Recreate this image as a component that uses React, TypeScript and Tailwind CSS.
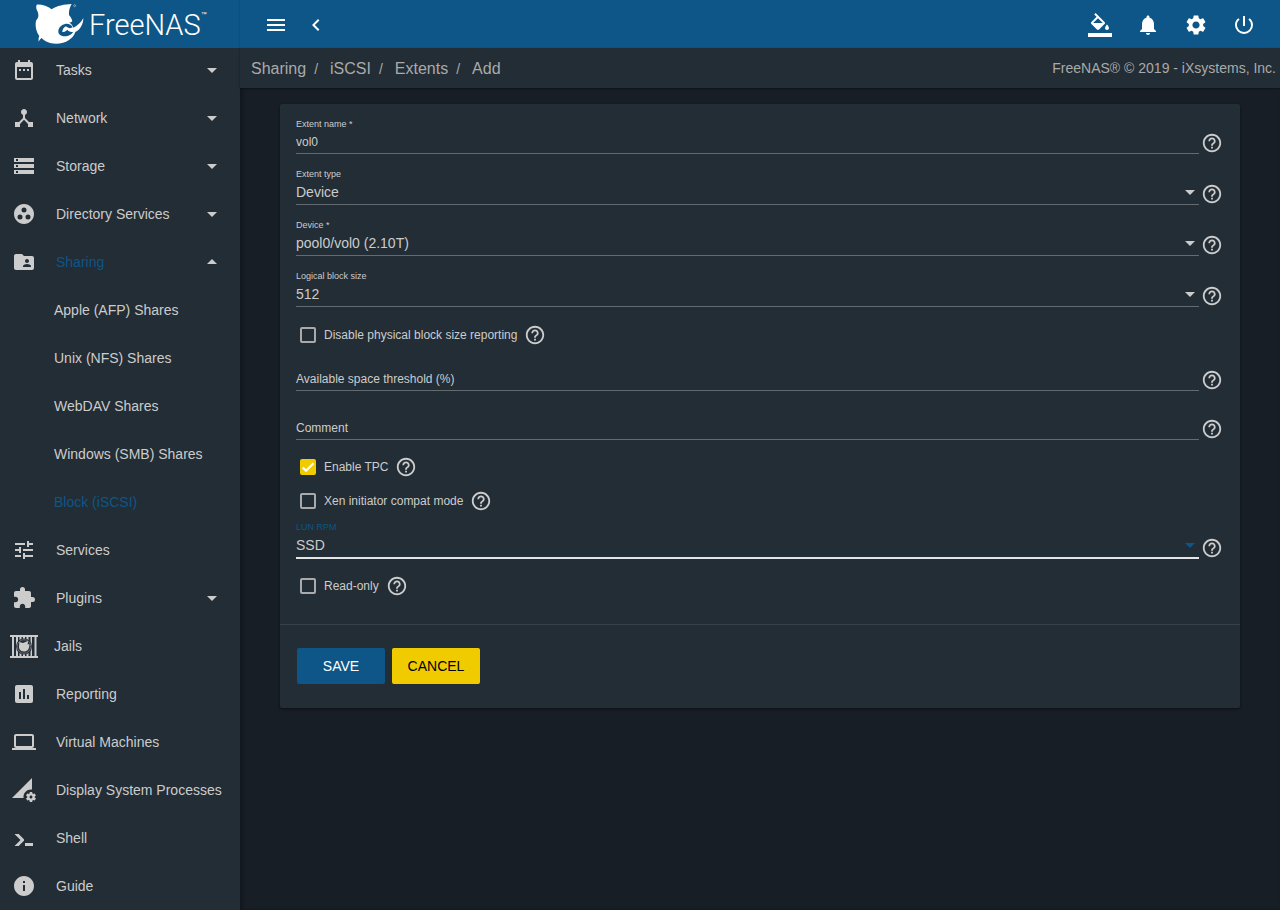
import type { ComponentType, ReactNode } from "react";
import {
  MdArrowDropDown,
  MdArrowDropUp,
  MdAssessment,
  MdChevronLeft,
  MdDateRange,
  MdDeviceHub,
  MdExtension,
  MdFolderShared,
  MdGroupWork,
  MdHelpOutline,
  MdInfo,
  MdLaptop,
  MdMenu,
  MdNotifications,
  MdPermDataSetting,
  MdPowerSettingsNew,
  MdSettings,
  MdStorage,
  MdTune,
} from "react-icons/md";

type IconType = ComponentType<{ className?: string }>;

function ShellIcon({ className }: { className?: string }) {
  return (
    <svg viewBox="0 0 24 24" fill="currentColor" className={className} aria-hidden="true">
      <path d="M13 20v-3h8v3h-8zM8.5 14L2.47 8h4.24l4.96 4.95c.58.59.58 1.55 0 2.12L6.74 20H2.5l6-6z" />
    </svg>
  );
}

function NetworkIcon({ className }: { className?: string }) {
  return (
    <svg viewBox="0 0 24 24" fill="currentColor" className={className} aria-hidden="true">
      <path d="M17 16l-4-4V8.820C14.160 8.400 15 7.300 15 6c0-1.660-1.340-3-3-3S9 4.340 9 6c0 1.300.84 2.400 2 2.820V12l-4 4H3v5h5v-3.050l4-4.200 4 4.200V21h5v-5h-4z" />
    </svg>
  );
}

function ColorFillIcon({ className }: { className?: string }) {
  return (
    <svg viewBox="0 0 24 24" fill="currentColor" className={className} aria-hidden="true">
      <path d="M16.56 8.94L7.62 0 6.21 1.41l2.38 2.38-5.15 5.15c-.59.59-.59 1.54 0 2.12l5.5 5.5c.29.29.68.44 1.06.44s.77-.15 1.06-.44l5.5-5.5c.59-.58.59-1.53 0-2.12zM5.21 10L10 5.21 14.79 10H5.21zM19 11.5s-2 2.17-2 3.5c0 1.1.9 2 2 2s2-.9 2-2c0-1.33-2-3.5-2-3.5zM0 20h24v4H0z" />
    </svg>
  );
}

function JailsIcon({ className }: { className?: string }) {
  return (
    <svg viewBox="0 0 28 24" className={className} aria-hidden="true">
      <g fill="currentColor">
        <path d="M0 1h28v2H0zM0 22h28v2H0zM2 3h2v19H2zM6 3h2v19H6zM9.500 3h2v19h-2zM16.500 3h2v19h-2zM20.500 3h1.500v19h-1.500zM24.500 3h2v19h-2zM13 3h2v19h-2z" />
      </g>
      <circle cx="14" cy="12.500" r="8" fill="#232d35" />
      <circle cx="14" cy="12.500" r="6.800" fill="none" stroke="currentColor" strokeWidth="0.800" opacity="0.5" />
      <path
        fill="currentColor"
        d="M9.200 8l3.800 1 5-2-.3 3.500 1.600-.5c.5 5-2 7.500-5.300 7.500-4 0-5.800-3.500-4.800-6.500z"
      />
    </svg>
  );
}

function SharkLogo({ className }: { className?: string }) {
  return (
    <svg viewBox="0 0 150 124" className={className} aria-hidden="true">
      <path
        fill="#fff"
        d="M5 4C20 3 38 8 50 18C66 7 88 3 110 2C104 11 101 23 102 35C107 41 111 47 112 54C108 57 104 59 101 57C108 61 113 66 115 73C127 67 138 58 145 44C145 62 136 79 121 86C114 106 94 121 63 121C43 121 29 114 20 104C16 107 14 110 11 115C10 108 11 102 13 98C3 84 0 66 3 52C11 43 12 35 8 25C4 18 2 11 5 4Z"
      />
      <path
        fill="#0d5687"
        d="M90 62C78 65 70 74 70 84C70 94 78 99 89 99C101 99 111 92 115 85C107 87 100 84 97 79C93 83 88 86 82 86C82 79 86 72 93 69C99 75 107 76 113 72C109 64 100 60 90 62Z"
      />
      <circle cx="119" cy="7" r="3" fill="none" stroke="#fff" strokeOpacity="0.6" strokeWidth="2" />
    </svg>
  );
}

interface NavEntry {
  label: string;
  icon: IconType;
  expand?: "down" | "up";
  active?: boolean;
  children?: { label: string; active?: boolean }[];
}

const NAV: NavEntry[] = [
  { label: "Tasks", icon: MdDateRange, expand: "down" },
  { label: "Network", icon: NetworkIcon, expand: "down" },
  { label: "Storage", icon: MdStorage, expand: "down" },
  { label: "Directory Services", icon: MdGroupWork, expand: "down" },
  {
    label: "Sharing",
    icon: MdFolderShared,
    expand: "up",
    active: true,
    children: [
      { label: "Apple (AFP) Shares" },
      { label: "Unix (NFS) Shares" },
      { label: "WebDAV Shares" },
      { label: "Windows (SMB) Shares" },
      { label: "Block (iSCSI)", active: true },
    ],
  },
  { label: "Services", icon: MdTune },
  { label: "Plugins", icon: MdExtension, expand: "down" },
  { label: "Jails", icon: JailsIcon },
  { label: "Reporting", icon: MdAssessment },
  { label: "Virtual Machines", icon: MdLaptop },
  { label: "Display System Processes", icon: MdPermDataSetting },
  { label: "Shell", icon: ShellIcon },
  { label: "Guide", icon: MdInfo },
];

function NavItem({ entry }: { entry: NavEntry }) {
  const Icon = entry.icon;
  const wide = entry.icon === JailsIcon;
  return (
    <li>
      <a href="#" className="flex h-12 items-center pr-4 whitespace-nowrap">
        <span className={wide ? "flex w-[54px] shrink-0 pl-2.5" : "flex w-14 shrink-0 pl-3"}>
          <Icon className={wide ? "h-6 w-7" : "size-6"} />
        </span>
        <span className={entry.active ? "grow text-[#0d5687]" : "grow"}>{entry.label}</span>
        {entry.expand === "down" && <MdArrowDropDown className="size-6 shrink-0" />}
        {entry.expand === "up" && <MdArrowDropUp className="size-6 shrink-0" />}
      </a>
      {entry.children && (
        <ul>
          {entry.children.map((child) => (
            <li key={child.label}>
              <a
                href="#"
                className={
                  child.active
                    ? "flex h-12 items-center pl-[54px] text-[#0d5687]"
                    : "flex h-12 items-center pl-[54px]"
                }
              >
                {child.label}
              </a>
            </li>
          ))}
        </ul>
      )}
    </li>
  );
}

function Help({ topic }: { topic: string }) {
  return (
    <button type="button" aria-label={`Help: ${topic}`} className="flex w-6 shrink-0 justify-center">
      <MdHelpOutline className="size-[22px]" />
    </button>
  );
}

function FieldRow({ label, children }: { label: string; children: ReactNode }) {
  return (
    <div className="flex items-end gap-px">
      <div className="relative flex grow flex-col">{children}</div>
      <Help topic={label} />
    </div>
  );
}

function TextField({ id, label, required, value }: { id: string; label: string; required?: boolean; value?: string }) {
  return (
    <FieldRow label={label}>
      <label
        htmlFor={id}
        className={
          value
            ? "text-[9px] leading-3"
            : "pointer-events-none absolute bottom-1 left-0 text-xs"
        }
      >
        {label}
        {required && " *"}
      </label>
      <input
        id={id}
        type="text"
        defaultValue={value}
        className={
          value
            ? "h-6 border-b border-[#636a70] bg-transparent text-xs outline-none"
            : "mt-3 h-6 border-b border-[#636a70] bg-transparent text-xs outline-none"
        }
      />
    </FieldRow>
  );
}

function SelectField({
  id,
  label,
  required,
  value,
  focused,
}: {
  id: string;
  label: string;
  required?: boolean;
  value: string;
  focused?: boolean;
}) {
  return (
    <FieldRow label={label}>
      <label htmlFor={id} className={focused ? "mb-px text-[9px] leading-3 text-[#0d5687]" : "mb-px text-[9px] leading-3"}>
        {label}
        {required && " *"}
      </label>
      <select
        id={id}
        defaultValue={value}
        className={
          focused
            ? "h-[25px] appearance-none border-b-2 border-[#e3e5e6] bg-transparent pb-0.5 text-sm outline-none"
            : "h-6 appearance-none border-b border-[#636a70] bg-transparent pb-0.5 text-sm outline-none"
        }
      >
        <option>{value}</option>
      </select>
      <svg
        viewBox="0 0 10 5"
        fill="currentColor"
        aria-hidden="true"
        className={
          focused
            ? "pointer-events-none absolute right-1 bottom-[11px] h-[5px] w-2.5 text-[#0d5687]"
            : "pointer-events-none absolute right-1 bottom-2.5 h-[5px] w-2.5"
        }
      >
        <path d="M0 0h10L5 5z" />
      </svg>
    </FieldRow>
  );
}

function CheckField({ id, label, checked }: { id: string; label: string; checked?: boolean }) {
  return (
    <div className="flex h-[22px] items-center pl-1">
      <span className="relative flex size-4">
        <input
          id={id}
          type="checkbox"
          defaultChecked={checked}
          className="peer size-4 appearance-none rounded-xs border-2 border-[#aaaaaa] checked:border-[#f0cb00] checked:bg-[#f0cb00]"
        />
        <svg
          viewBox="0 0 24 24"
          aria-hidden="true"
          className="pointer-events-none absolute inset-0 hidden size-4 peer-checked:block"
        >
          <path d="M4.100 12.700L9 17.600 20.300 6.300" fill="none" stroke="#fff" strokeWidth="3.200" />
        </svg>
      </span>
      <label htmlFor={id} className="pr-1.5 pl-2 text-xs">
        {label}
      </label>
      <Help topic={label} />
    </div>
  );
}

const CRUMBS = ["Sharing", "iSCSI", "Extents", "Add"];

export default function App() {
  return (
    <div className="flex h-screen flex-col overflow-hidden bg-[#171e26] font-['Liberation_Sans',Arial,sans-serif] text-sm text-[#cccccc]">
      <header className="flex h-12 shrink-0 bg-[#0d5687] text-white">
        <a href="#" aria-label="FreeNAS home" className="flex w-60 shrink-0 items-center border-r border-[#0c4f7c] pl-[35px]">
          <SharkLogo className="h-[42px] w-[50px] shrink-0" />
          <span className="pt-0.5 pl-1 font-[Roboto,'Open_Sans',sans-serif] text-[29px] leading-10 font-light">FreeNAS</span>
          <span className="self-start pt-2.5 text-[6px]">™</span>
        </a>
        <div className="flex grow items-center justify-between px-6 pt-0.5">
          <div className="flex gap-4">
            <button type="button" aria-label="Toggle menu">
              <MdMenu className="size-6" />
            </button>
            <button type="button" aria-label="Collapse menu">
              <MdChevronLeft className="size-6" />
            </button>
          </div>
          <div className="flex gap-6">
            <button type="button" aria-label="Theme">
              <ColorFillIcon className="size-6" />
            </button>
            <button type="button" aria-label="Notifications">
              <MdNotifications className="size-6" />
            </button>
            <button type="button" aria-label="Settings">
              <MdSettings className="size-6" />
            </button>
            <button type="button" aria-label="Power">
              <MdPowerSettingsNew className="size-6" />
            </button>
          </div>
        </div>
      </header>

      <div className="flex min-h-0 grow">
        <nav className="w-60 shrink-0 overflow-hidden bg-[#232d35]">
          <ul className="-mt-0.5">
            {NAV.map((entry) => (
              <NavItem key={entry.label} entry={entry} />
            ))}
          </ul>
        </nav>

        <main className="min-w-0 grow shadow-[inset_3px_0_4px_-1px_rgba(0,0,0,0.3)]">
          <div className="flex h-10 items-center justify-between bg-[#232d35] pr-1 pl-[11px] text-[#aaaaaa] shadow-[0_1px_2px_rgba(0,0,0,0.4)]">
            <ol className="flex items-center pt-0.5 text-base">
              {CRUMBS.map((crumb, i) => (
                <li key={crumb} className="flex items-center">
                  {i > 0 && <span className="pr-3 pl-2 text-sm">/</span>}
                  <a href="#">{crumb}</a>
                </li>
              ))}
            </ol>
            <p>FreeNAS® © 2019 - iXsystems, Inc.</p>
          </div>

          <form className="mx-10 mt-4 rounded-xs bg-[#232d35] shadow-[0_1px_3px_rgba(0,0,0,0.5)]">
            <div className="px-4 pt-3.5 pb-[27px]">
              <div className="flex flex-col gap-3.5">
                <TextField id="name" label="Extent name" required value="vol0" />
                <SelectField id="type" label="Extent type" value="Device" />
                <SelectField id="device" label="Device" required value="pool0/vol0 (2.10T)" />
                <SelectField id="blocksize" label="Logical block size" value="512" />
              </div>
              <div className="mt-[17px]">
                <CheckField id="pblocksize" label="Disable physical block size reporting" />
              </div>
              <div className="mt-[9px] flex flex-col gap-[13px]">
                <TextField id="threshold" label="Available space threshold (%)" />
                <TextField id="comment" label="Comment" />
              </div>
              <div className="mt-4 flex flex-col gap-3">
                <CheckField id="tpc" label="Enable TPC" checked />
                <CheckField id="xen" label="Xen initiator compat mode" />
              </div>
              <div className="mt-[9px] flex flex-col gap-4">
                <SelectField id="rpm" label="LUN RPM" value="SSD" focused />
                <CheckField id="ro" label="Read-only" />
              </div>
            </div>
            <div className="flex gap-[7px] border-t border-[#39424a] px-[17px] pt-[23px] pb-6">
              <button type="submit" className="h-9 w-[88px] rounded-xs bg-[#0d5687] text-white">
                SAVE
              </button>
              <button type="button" className="h-9 w-[88px] rounded-xs bg-[#f0cb00] text-black">
                CANCEL
              </button>
            </div>
          </form>
        </main>
      </div>
    </div>
  );
}
